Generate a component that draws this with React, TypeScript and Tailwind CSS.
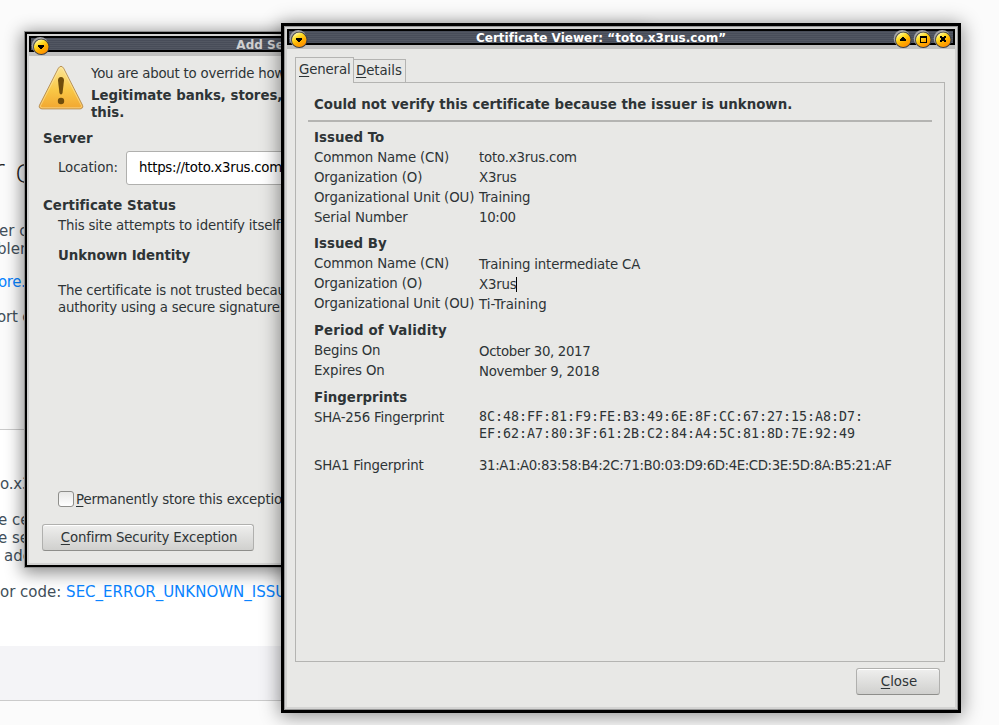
import React from "react";

type Glyph = "down" | "up" | "max" | "close";

function TitleButton({ glyph }: { glyph: Glyph }) {
  const id = "ball-" + glyph;
  return (
    <svg className="block h-5 w-5 shrink-0" viewBox="0 0 20 20">
      <defs>
        <linearGradient id={id} x1="0.2" y1="0" x2="0.8" y2="1">
          <stop offset="0" stopColor="#fffbc8" />
          <stop offset="0.3" stopColor="#ffe02a" />
          <stop offset="0.6" stopColor="#ffb000" />
          <stop offset="1" stopColor="#ff8a00" />
        </linearGradient>
      </defs>
      <circle cx="9.2" cy="9.4" r="8.5" fill="#a4a4a6" />
      <circle cx="10.3" cy="10.9" r="8.2" fill="#3c3e42" />
      <circle cx="10.2" cy="10.8" r="7.3" fill={"url(#" + id + ")"} />
      {glyph === "down" && <path d="M7 9h6v2h-1v1h-1v1H9v-1H8v-1H7z" fill="#000" />}
      {glyph === "up" && <path d="M9 8h2v1h1v1h1v2H7v-2h1V9h1z" fill="#000" />}
      {glyph === "max" && <path d="M7 7h7v7H7zM8 9v4h5V9z" fill="#000" fillRule="evenodd" />}
      {glyph === "close" && <path d="M7 7h2v1h2V7h2v2h-1v2h1v2h-2v-1H9v1H7v-2h1V9H7z" fill="#000" />}
    </svg>
  );
}

function TitleBar({ title, active }: { title: string; active: boolean }) {
  return (
    <div className="h-5 bg-[#c1c1c0]">
      <div className="flex h-4 items-start justify-between border-2 border-black bg-[repeating-linear-gradient(to_bottom,#484d59_0px,#484d59_1px,#525762_1px,#525762_2px)]">
        <div className="-mt-0.5 flex">
          <TitleButton glyph="down" />
        </div>
        <div
          className={
            active
              ? "text-[12px] leading-[14px] font-bold tracking-[0.03px] whitespace-nowrap text-white"
              : "text-[12px] leading-[14px] font-bold whitespace-nowrap text-[#d0d0d0]"
          }
        >
          {title}
        </div>
        <div className="-mt-0.5 flex">
          <TitleButton glyph="up" />
          <TitleButton glyph="max" />
          <TitleButton glyph="close" />
        </div>
      </div>
    </div>
  );
}

function WarningIcon() {
  return (
    <svg className="block h-[46px] w-[46px] shrink-0" viewBox="0 0 46 46">
      <defs>
        <linearGradient id="warn" x1="0" y1="0" x2="0" y2="1">
          <stop offset="0" stopColor="#fbe596" />
          <stop offset="0.55" stopColor="#f9c846" />
          <stop offset="1" stopColor="#f2a630" />
        </linearGradient>
      </defs>
      <path d="M20.4 3.2Q23 -.6 25.6 3.2L44.5 40.2Q45.7 43.6 42 43.9H4Q.3 43.6 1.5 40.2Z" fill="url(#warn)" stroke="#b99359" strokeWidth="1" />
      <path d="M21.2 3.9Q23 1.2 24.8 3.9L43.4 40.6Q44 42.6 42 42.8H4Q2 42.6 2.6 40.6Z" fill="none" stroke="#fff0b8" strokeOpacity=".5" strokeWidth="1" />
      <path d="M20 15.5Q20 12 23 12T26 15.5L24.6 27.5Q24.3 29.5 23 29.5T21.4 27.5Z" fill="#6f4d0c" />
      <circle cx="23" cy="36" r="3.2" fill="#6f4d0c" />
    </svg>
  );
}

function Mnemonic({ text }: { text: string }) {
  return (
    <>
      <span className="underline decoration-1 underline-offset-[2px] [text-decoration-skip-ink:none]">{text[0]}</span>
      {text.slice(1)}
    </>
  );
}

function Button({ label, className }: { label: string; className: string }) {
  return (
    <button
      className={
        "block h-[27px] rounded-[3px] border border-[#b0b0ae] border-b-[#8e8e8b] bg-linear-to-b from-[#efefee] to-[#d0d0ce] text-center leading-[24px] shadow-[inset_0_1px_0_#fff] " +
        className
      }
    >
      <Mnemonic text={label} />
    </button>
  );
}

type FieldProps = {
  label: string;
  value: React.ReactNode;
  offset?: boolean;
  labelClass?: string;
  valueClass?: string;
};

function Field({ label, value, offset = false, labelClass = "", valueClass = "" }: FieldProps) {
  return (
    <div className="flex h-5 leading-5 whitespace-nowrap">
      <div className={"w-[165px] " + labelClass}>{label}</div>
      <div className={(offset ? "pt-px " : "") + valueClass}>{value}</div>
    </div>
  );
}

function Heading({ children }: { children: React.ReactNode }) {
  return <h2 className="h-5 leading-5 font-bold tracking-[0.03px]">{children}</h2>;
}

function ErrorPage() {
  return (
    <div className="flex h-full w-[900px] flex-col overflow-hidden text-[15px] leading-[18px] whitespace-nowrap text-[#424f5a]">
      <div className="h-[430px] border-b border-[#cbcbcb] pt-[154px]">
        <h1 className="-ml-[9px] h-9 text-[33px] leading-9 font-extralight text-[#222]">r connection</h1>
        <div className="mt-8 -ml-px">er c</div>
        <div className="-ml-[3px]">blem</div>
        <div className="mt-[15px] -ml-[2px] tracking-[-0.4px] text-[#0a84ff]">ore.</div>
        <div className="mt-[17px] -ml-[3px] tracking-[-0.2px]">ort e</div>
      </div>
      <div className="h-[216px] bg-white pt-[45px]">
        <div className="tracking-[-0.2px]">o.x3rus.com</div>
        <div className="mt-[18px] -ml-[2px]">e certificate</div>
        <div className="-ml-[2px]">e server</div>
        <div className="ml-1">additional</div>
        <div className="mt-[18px]">
          or code: <span className="text-[#0a84ff]">SEC_ERROR_UNKNOWN_ISSUER</span>
        </div>
      </div>
      <div className="h-[55px] border-b border-[#cbcbcb] bg-[#f4f4f7]" />
    </div>
  );
}

function ExceptionDialog() {
  return (
    <section className="absolute top-[31px] left-[24px] h-[537px] w-[622px] border border-[#8f8f8f] bg-[#e8e8e6] shadow-[0_3px_16px_2px_rgba(0,0,0,0.45)]">
      <div className="h-full border-2 border-black">
        <div className="h-full border-2 border-[#d2d2d1]">
          <TitleBar title="Add Security Exception" active={false} />
          <div className="pl-[9px]">
            <div className="flex pt-[9px] whitespace-nowrap">
              <WarningIcon />
              <div className="pl-[7px] leading-[17px]">
                <p className="tracking-[-0.22px]">You are about to override how Firefox identifies this site.</p>
                <p className="mt-[5px] font-bold tracking-[-0.03px]">
                  Legitimate banks, stores, and other public sites
                  <br />
                  this.
                </p>
              </div>
            </div>
            <div className="pt-2 pl-[5px] whitespace-nowrap">
              <Heading>Server</Heading>
              <div className="mt-0.5 flex h-[34px] items-center pl-[15px]">
                <label className="w-[68px] tracking-[-0.1px]">Location:</label>
                <div className="h-[34px] w-[360px] rounded-[3px] border border-[#b0b0ae] bg-white pl-3 leading-[31px] tracking-[-0.25px] text-black">
                  https://toto.x3rus.com/
                </div>
              </div>
              <div className="mt-[11px]">
                <Heading>Certificate Status</Heading>
              </div>
              <div className="pl-[15px] leading-[17px] tracking-[-0.18px]">
                <p className="mt-px">This site attempts to identify itself with invalid</p>
                <p className="mt-[13px] font-bold tracking-[-0.07px]">Unknown Identity</p>
                <p className="mt-[18px]">
                  The certificate is not trusted because it hasn’t
                  <br />
                  <span className="tracking-[-0.21px]">authority using a secure signature.</span>
                </p>
                <div className="mt-[175px] flex h-4 items-center">
                  <span className="h-4 w-4 rounded-[3px] border border-[#8e8e8b] bg-linear-to-b from-[#e8e8e7] to-white" />
                  <span className="ml-0.5">
                    <Mnemonic text="Permanently store this exception" />
                  </span>
                </div>
              </div>
              <Button label="Confirm Security Exception" className="mt-[17px] -ml-px w-[212px] pl-0.5 tracking-[-0.19px]" />
            </div>
          </div>
        </div>
      </div>
    </section>
  );
}

function CertificateViewer() {
  return (
    <section className="absolute top-[23px] left-[281px] h-[690px] w-[680px] border-3 border-black bg-[#e8e8e6] shadow-[0_2px_18px_1px_rgba(0,0,0,0.45)]">
      <div className="h-full border border-[#989898]">
        <div className="h-full border-2 border-[#d4d4d3]">
          <TitleBar title="Certificate Viewer: “toto.x3rus.com”" active />
          <div className="flex flex-col px-2 pt-2">
            <div className="flex h-[25px] items-end">
              <div className="z-10 -mb-px h-[26px] w-[59px] border border-b-0 border-[#b4b4b2] bg-[#e8e8e6] pl-[3px] leading-[23px] tracking-[-0.15px]">
                <Mnemonic text="General" />
              </div>
              <div className="-ml-px h-[23px] w-[53px] border border-b-0 border-[#b4b4b2] pl-0.5 leading-[22px] tracking-[-0.06px]">
                <Mnemonic text="Details" />
              </div>
            </div>
            <div className="h-[580px] w-[650px] border border-[#b4b4b2] px-3 pt-3">
              <div className="ml-1.5">
                <Heading>Could not verify this certificate because the issuer is unknown.</Heading>
              </div>
              <hr className="mt-[5px] h-0.5 w-[624px] border-0 bg-[#b4b4b2]" />
              <div className="pt-1.5 pl-1.5">
                <Heading>Issued To</Heading>
                <Field label="Common Name (CN)" value="toto.x3rus.com" labelClass="tracking-[-0.15px]" valueClass="tracking-[-0.2px]" />
                <Field label="Organization (O)" value="X3rus" labelClass="tracking-[-0.13px]" valueClass="tracking-[-0.2px]" />
                <Field label="Organizational Unit (OU)" value="Training" labelClass="tracking-[-0.13px]" valueClass="tracking-[-0.15px]" />
                <Field label="Serial Number" value="10:00" labelClass="tracking-[-0.15px]" valueClass="tracking-[-0.35px]" />
                <div className="h-1.5" />
                <Heading>Issued By</Heading>
                <Field label="Common Name (CN)" value="Training intermediate CA" offset labelClass="tracking-[-0.15px]" valueClass="tracking-[-0.17px]" />
                <Field
                  label="Organization (O)"
                  value={<span className="border-r border-black">X3rus</span>}
                  offset
                  labelClass="tracking-[-0.13px]"
                  valueClass="tracking-[-0.2px]"
                />
                <Field label="Organizational Unit (OU)" value="Ti-Training" offset labelClass="tracking-[-0.13px]" />
                <div className="h-[7px]" />
                <div className="tracking-[0.17px]">
                  <h2 className="h-5 leading-5 font-bold">Period of Validity</h2>
                </div>
                <Field label="Begins On" value="October 30, 2017" offset labelClass="tracking-[-0.2px]" valueClass="tracking-[-0.35px]" />
                <Field label="Expires On" value="November 9, 2018" offset labelClass="tracking-[-0.13px]" valueClass="tracking-[-0.25px]" />
                <div className="h-[7px]" />
                <Heading>Fingerprints</Heading>
                <div className="flex h-12 whitespace-nowrap">
                  <div className="w-[165px] leading-5 tracking-[-0.21px]">SHA-256 Fingerprint</div>
                  <div className="font-['DejaVu_Sans_Mono',monospace] leading-[17px] tracking-[-0.025px]">
                    8C:48:FF:81:F9:FE:B3:49:6E:8F:CC:67:27:15:A8:D7:
                    <br />
                    EF:62:A7:80:3F:61:2B:C2:84:A4:5C:81:8D:7E:92:49
                  </div>
                </div>
                <Field
                  label="SHA1 Fingerprint"
                  value="31:A1:A0:83:58:B4:2C:71:B0:03:D9:6D:4E:CD:3E:5D:8A:B5:21:AF"
                  labelClass="tracking-[-0.2px]"
                  valueClass="tracking-[-0.41px]"
                />
              </div>
            </div>
            <Button label="Close" className="mt-1.5 mr-[7px] w-[84px] self-end pl-0.5" />
          </div>
        </div>
      </div>
    </section>
  );
}

export default function App() {
  return (
    <main className="relative h-[725px] w-[999px] overflow-hidden bg-[#fbfbfb] font-['DejaVu_Sans',sans-serif] text-[13.333px] text-[#2e3436]">
      <ErrorPage />
      <ExceptionDialog />
      <CertificateViewer />
    </main>
  );
}
